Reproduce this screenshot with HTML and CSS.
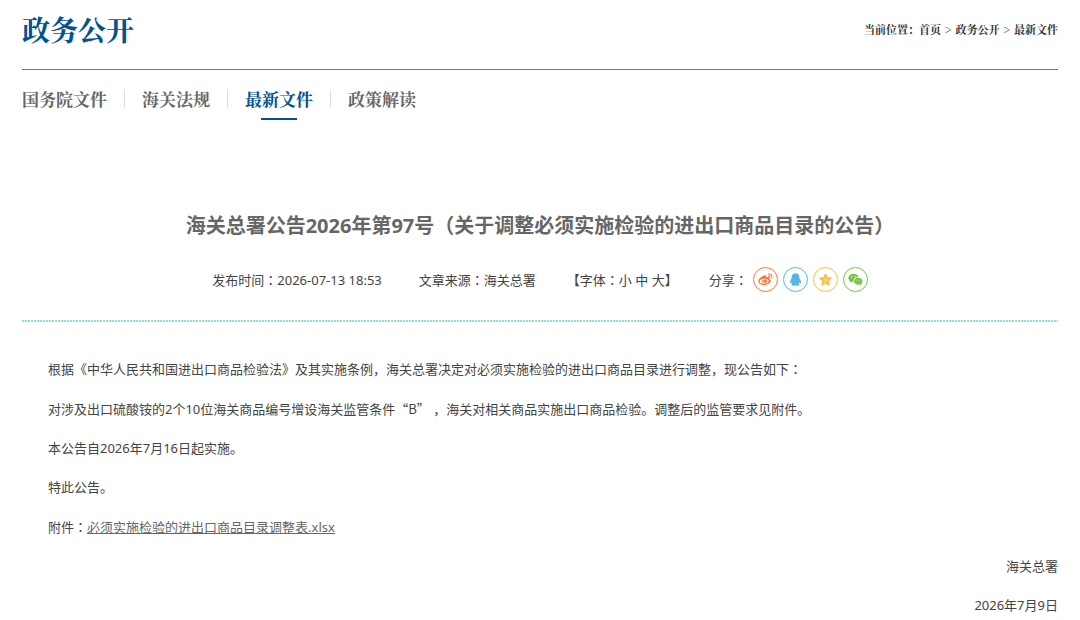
FILE: index.html
```html
<!DOCTYPE html>
<html lang="zh-CN">
<head>
<meta charset="utf-8">
<title>海关总署公告2026年第97号</title>
<link rel="stylesheet" href="styles.css">
</head>
<body>
<div class="page">
  <header class="header">
    <h2 class="channel">政务公开</h2>
    <nav class="crumbs" aria-label="当前位置">
      当前位置：<a href="#">首页</a> <span class="sep">&gt;</span> <a href="#">政务公开</a> <span class="sep">&gt;</span> <a href="#">最新文件</a>
    </nav>
  </header>
  <nav class="tabs" aria-label="栏目">
    <a class="tab" href="#">国务院文件</a>
    <a class="tab" href="#">海关法规</a>
    <a class="tab active" href="#" aria-current="page">最新文件</a>
    <a class="tab" href="#">政策解读</a>
  </nav>
  <main>
    <h1 class="title">海关总署公告2026年第97号（关于调整必须实施检验的进出口商品目录的公告）</h1>
    <div class="meta">
      <span class="published">发布时间<span class="mid" lang="zh-TW">：</span>2026-07-13 18:53</span>
      <span class="source">文章来源<span class="mid" lang="zh-TW">：</span>海关总署</span>
      <span class="sizes">【字体<span class="mid" lang="zh-TW">：</span><button type="button">小</button> <button type="button" class="on">中</button> <button type="button">大</button>】</span>
      <div class="share">
        <span>分享<span class="mid" lang="zh-TW">：</span></span>
        <a class="icon weibo" href="#" aria-label="微博"><svg viewBox="0 0 24 24"><path fill="currentColor" fill-rule="evenodd" d="M10.2 7.7c1.5-.7 3 .1 2.4 2 2-.8 3.5-.2 3 1.4 3.700 1.100 2.100 6.500-4.900 6.700-6 .1-8-4.100-4.200-7.500 1.200-1.200 2.500-2.100 3.700-2.600zM10.700 11.200c-3.100 0-4.900 1.500-4.700 3.100.2 1.500 2.200 2.500 4.700 2.300 3-.2 4.800-1.700 4.600-3.200-.2-1.400-2-2.200-4.600-2.200zM10.700 12c2-.3 3.300.8 2.800 2.200-.5 1.600-2.300 2.200-3.800 1.800-1.500-.4-1.900-1.700-1.200-2.700.5-.7 1.300-1.200 2.200-1.300zM9.900 13.600a.9.9 0 1 0 0 1.800.9.9 0 0 0 0-1.800z"/><path fill="none" stroke="currentColor" stroke-width="1.100" stroke-linecap="round" d="M14.700 6.300c2.600-.5 4.500 1.700 3.800 4.200M14.900 8.500c1-.1 1.600.6 1.300 1.500"/></svg></a>
        <a class="icon qq" href="#" aria-label="QQ"><svg viewBox="0 0 24 24"><path fill="currentColor" d="M12 5.500c2.700 0 4 1.800 4 4v1.300c1.100 1.500 1.900 3.100 1.700 4.600-.2.900-.8.300-1.400-.5-.2.800-.5 1.300-1 1.800.7.300 1 .7.900 1.100-.3.900-3.200.9-4.200.2-1 .7-3.900.7-4.200-.2-.1-.4.200-.8.900-1.100-.5-.5-.8-1-1-1.800-.6.800-1.200 1.400-1.400.5-.2-1.500.6-3.100 1.700-4.600V9.500c0-2.200 1.300-4 4-4z"/></svg></a>
        <a class="icon star" href="#" aria-label="QQ空间"><svg viewBox="0 0 24 24"><path fill="currentColor" stroke="currentColor" stroke-width="1" stroke-linejoin="round" d="m12 5.800 1.900 4.200 4.400.5-3.300 3.100.9 4.500-3.900-2.300-3.900 2.300.9-4.500-3.300-3.100 4.400-.5z"/><path fill="none" stroke="#fff" stroke-width=".6" d="M11 11.300q1.500-.1 2.900.5l-3.300 2.500q1.700.3 3.600.1"/></svg></a>
        <a class="icon wechat" href="#" aria-label="微信"><svg viewBox="0 0 24 24"><path fill="currentColor" d="M9.900 6.100c3 0 4.900 1.600 5.200 3.600-3.500-.1-5.900 2.200-5.100 4.900-.8.100-1.500 0-2.200-.2l-1.900 1 .5-1.600c-1.200-.9-1.800-2-1.800-3.300 0-2.500 2.400-4.400 5.300-4.400z"/><path fill="currentColor" d="M14.900 10.300c2.500 0 4.400 1.600 4.400 3.600 0 1.100-.6 2.100-1.500 2.800l.4 1.300-1.500-.8c-3.300.8-6.200-.9-6.200-3.400 0-2 2-3.500 4.400-3.500z"/><g fill="#fff"><circle cx="8.200" cy="9.200" r=".6"/><circle cx="11.700" cy="9.200" r=".6"/><circle cx="13.500" cy="12.800" r=".5"/><circle cx="16.400" cy="12.800" r=".5"/></g></svg></a>
      </div>
    </div>
    <article class="body">
      <p>根据《中华人民共和国进出口商品检验法》及其实施条例，海关总署决定对必须实施检验的进出口商品目录进行调整，现公告如下<span class="mid" lang="zh-TW">：</span></p>
      <p>对涉及出口硫酸铵的2个10位海关商品编号增设海关监管条件<span class="wide">“B”</span> ，海关对相关商品实施出口商品检验。调整后的监管要求见附件。</p>
      <p>本公告自2026年7月16日起实施。</p>
      <p>特此公告。</p>
      <p>附件<span class="mid" lang="zh-TW">：</span><a class="file" href="#">必须实施检验的进出口商品目录调整表.xlsx</a></p>
      <p class="sign">海关总署</p>
      <p class="sign">2026年7月9日</p>
    </article>
  </main>
</div>
</body>
</html>
```
FILE: styles.css
```css
* { box-sizing: border-box; }
body {
  margin: 0;
  background: #fff;
  color: #444;
  font: 13px/20px "Noto Sans", "Noto Sans CJK SC", sans-serif;
}
a { color: inherit; text-decoration: none; }
.page { padding: 0 22px; }
.header {
  display: flex;
  justify-content: space-between;
  align-items: center;
  height: 70px;
  padding-bottom: 11px;
  border-bottom: 1px solid #4583b6;
}
.channel, .crumbs, .tabs { font-family: "Noto Serif CJK SC", "Noto Serif SC", "Liberation Serif", "Noto Sans CJK SC", serif; }
.channel { margin: 0; font-size: 28px; line-height: 40px; color: #005293; }
.crumbs { font-size: 11px; font-weight: 700; color: #333; }
.sep { margin: 0 1px; font-size: 12px; font-weight: 400; }
.tabs { display: flex; padding-top: 20px; }
.tab {
  position: relative;
  padding-bottom: 12px;
  font-size: 17px;
  line-height: 18px;
  font-weight: 700;
  color: #666;
}
.tab + .tab { margin-left: 35px; }
.tab + .tab::before {
  content: "";
  position: absolute;
  left: -18px;
  top: 0;
  width: 1px;
  height: 18px;
  background: #ddd;
}
.active { color: #005293; }
.active::after {
  content: "";
  position: absolute;
  left: 50%;
  bottom: 0;
  width: 36px;
  height: 2px;
  margin-left: -18px;
  background: #005293;
}
.title {
  margin: 91px 0 0;
  font-size: 20px;
  line-height: 30px;
  text-align: center;
  color: #666;
}
.meta {
  display: flex;
  justify-content: center;
  align-items: center;
  gap: 31px;
  padding: 26px 0 30px;
  background: repeating-linear-gradient(90deg, #94dedb 0 2px, #e2f6f5 2px 3px) bottom / 100% 2px no-repeat;
}
.mid { font-family: "Noto Sans CJK TC", sans-serif; }
.wide { font-family: "Noto Sans CJK SC", sans-serif; }
.published { padding-right: 6px; }
.sizes button {
  padding: 0;
  border: 0;
  background: none;
  color: inherit;
  font: inherit;
}
.sizes .on { color: #005293; }
.share { display: flex; align-items: center; gap: 5px; }
.icon {
  width: 25px;
  height: 25px;
  border: 1px solid;
  border-radius: 50%;
}
.icon svg { display: block; width: 100%; height: 100%; }
.weibo { color: #ff763b; }
.qq { color: #56b6e7; }
.star { color: #fdbe3d; }
.wechat { color: #7bc549; }
.body { padding-top: 27px; }
.body p { margin: 0; padding-left: 26px; line-height: 39px; }
.file { color: #666; text-decoration: underline; }
.body .sign { text-align: right; }
```
